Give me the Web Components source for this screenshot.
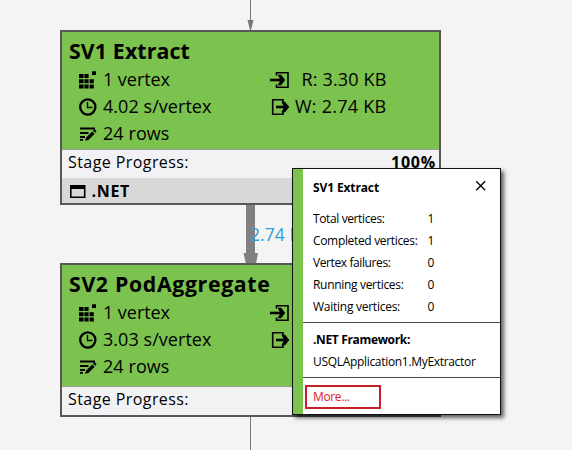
<!DOCTYPE html>
<html lang="en">
<head>
<meta charset="utf-8">
<title>Job graph</title>
<style>
html,body{margin:0;width:572px;height:450px;overflow:hidden;background:#f4f4f4}
body{font-family:"Open Sans","Noto Sans",sans-serif;color:#000}
</style>
</head>
<body>
<job-graph></job-graph>
<script>
// Text run whose tracking is adjusted so that it takes exactly `w` pixels.
class FitText extends HTMLElement{
  constructor(){super();this.attachShadow({mode:'open'}).innerHTML=`<style>
    :host{display:block;white-space:nowrap;flex:none}
    span{display:inline-block;white-space:pre}</style><span><slot></slot></span>`;}
  connectedCallback(){
    const w=parseFloat(this.getAttribute('w')),s=this.shadowRoot.querySelector('span');
    const n=this.textContent.length;
    if(w&&n>1){s.style.letterSpacing=((w-s.getBoundingClientRect().width)/n).toFixed(3)+'px';this.style.width=s.style.width=w+'px';}
  }
}

const ICONS={
  vertex:`<path d="M1 4h4.600v4H1zM6.400 4h4.200v4H6.400zM1 9.200h4.600v4H1zM6.400 9.200h4.200v4H6.400zM11.600 9.200h4.200v4h-4.200zM1 14.500h4.600v4H1zM6.400 14.500h4.200v4H6.400zM11.600 14.500h4.200v4h-4.200zM14 1.200h4v3.800h-4z"/>`,
  clock:`<circle cx="9.800" cy="10" r="7.600" fill="none" stroke="#000" stroke-width="2.300"/><path d="M9.500 5v5.500h5" fill="none" stroke="#000" stroke-width="1.400"/>`,
  rows:`<path d="M2 4.500h15M2 9h8.500M2 13h5" fill="none" stroke="#000" stroke-width="1.900"/><path d="M7 16.800l1.200-3.400 6-6 2.500 2.300-6.200 6.200zM14.900 6.400l1.400-1.300 2.300 2-1.300 1.600zM2 15h3v1.700H2z"/>`,
  read:`<path d="M6.500 5.500V2.700H18V17.300H6.500V14.500" fill="none" stroke="#000" stroke-width="1.600"/><path d="M0 10h12" stroke="#000" stroke-width="2.600"/><path d="M7.500 4.800h3.700l4 5.200-4 5.200H7.500l3-5.200z"/>`,
  write:`<path d="M13 5.500V2.700H2.700V17.300H13V14.500" fill="none" stroke="#000" stroke-width="1.600"/><path d="M6 10h10" stroke="#000" stroke-width="2.600"/><path d="M11.300 4.800h3.700l4.300 5.200-4.300 5.200h-3.700l3-5.200z"/>`,
  window:`<path d="M2 4h15.500v13H2zM3.600 8v7.400h12.300V8z" fill-rule="evenodd"/>`,
  close:`<path d="M5.200 5.200l9 9M14.200 5.200l-9 9" stroke="#000" stroke-width="1.300"/>`
};
class UiIcon extends HTMLElement{
  constructor(){super();this.attachShadow({mode:'open'});}
  connectedCallback(){this.shadowRoot.innerHTML=`<style>:host{display:block;width:20px;height:20px;flex:none}svg{display:block}</style>
    <svg width="20" height="20" viewBox="0 0 20 20">${ICONS[this.getAttribute('name')]}</svg>`;}
}

class StageNode extends HTMLElement{
  constructor(){super();this.attachShadow({mode:'open'});}
  connectedCallback(){
    const a=k=>this.getAttribute(k);
    const io=(icon,key,w)=>`<div class="cell io"><ui-icon name="${icon}"></ui-icon>${a(key)?`<fit-text w="${w}">${a(key)}</fit-text>`:''}</div>`;
    this.shadowRoot.innerHTML=`<style>
      :host{display:flex;flex-direction:column;box-sizing:border-box;width:381px;border:2px solid #585858;border-bottom-width:2.500px}
      .main{background:#7cc24e;border-bottom:1px solid #9a9a96;padding:0 0 0 7px;box-sizing:border-box;height:var(--main,118px)}
      .title{font-size:21.300px;font-weight:700;line-height:28px;padding-top:5px}
      .stats{display:grid;grid-template-columns:201px 1fr;grid-auto-rows:27px;line-height:27px;font-size:18px;padding-top:1px}
      .cell{display:flex;align-items:center}
      .left{padding-left:9px;gap:5px}
      .io fit-text{margin-left:auto}.io{width:116.500px}
      .progress{display:flex;justify-content:space-between;height:28px;line-height:25px;font-size:16px;background:#f2f2f4;padding:0 3px 0 6px}
    </style>
    <div class="main"><fit-text class="title" w="${a('tw')}">${a('name')}</fit-text>
      <div class="stats">
        <div class="cell left"><ui-icon name="vertex"></ui-icon><fit-text w="67">1 vertex</fit-text></div>
        ${io('read','read',85)}
        <div class="cell left"><ui-icon name="clock"></ui-icon><fit-text w="108.500">${a('time')} s/vertex</fit-text></div>
        ${io('write','write',91.5)}
        <div class="cell left"><ui-icon name="rows"></ui-icon><fit-text w="66.500">24 rows</fit-text></div>
      </div></div>
    <div class="progress"><fit-text w="121">Stage Progress:</fit-text>${a('done')?`<fit-text w="45" style="font-weight:700">${a('done')}</fit-text>`:''}</div>
    <slot></slot>`;
  }
}

class CodeBadge extends HTMLElement{
  constructor(){super();this.attachShadow({mode:'open'}).innerHTML=`<style>
    :host{display:flex;align-items:center;gap:4px;height:24.500px;padding:1px 0 0 5.500px;box-sizing:border-box;background:#d8d8d8;font-size:16px;font-weight:700;line-height:24px}
    </style><ui-icon name="window"></ui-icon><fit-text w="38.500">.NET</fit-text>`;}
}

class StageDetails extends HTMLElement{
  constructor(){super();
    const rows=[['Total vertices:',71.5,1],['Completed vertices:',104.5,1],['Vertex failures:',77.5,0],['Running vertices:',90.5,0],['Waiting vertices:',87,0]];
    this.attachShadow({mode:'open'}).innerHTML=`<style>
      :host{display:block;box-sizing:border-box;width:209px;height:247px;border:1px solid #111;background:#fff;box-shadow:3px 3px 4px rgba(0,0,0,.6);font-size:12px;line-height:22px}
      .wrap{display:flex;flex-direction:column;height:245px;box-sizing:border-box;border-left:10px solid #7cc24e}
      section{padding-left:10px}
      section+section{border-top:1px solid #484848}
      header{display:flex;justify-content:space-between;height:39px;padding:8px 9px 0 0;box-sizing:border-box;font-weight:700}
      header ui-icon{margin-top:-1px}
      .counts{height:153px;box-sizing:border-box}
      .row{display:grid;grid-template-columns:114.500px 1fr;height:22px}
      .code{height:55px;padding-top:6px;box-sizing:border-box}
      .head{font-weight:700}
      .more{padding:7px 0 0 2px;height:37px;box-sizing:border-box}
      .link{box-sizing:border-box;width:76px;height:24px;border:2px solid #c52026;color:#e02226;padding-left:6px;line-height:19px}
    </style><div class="wrap">
      <section class="counts"><header><fit-text w="66">SV1 Extract</fit-text><ui-icon name="close"></ui-icon></header>
        ${rows.map(r=>`<div class="row"><fit-text w="${r[1]}">${r[0]}</fit-text><span>${r[2]}</span></div>`).join('')}</section>
      <section class="code"><fit-text class="head" w="97">.NET Framework:</fit-text><fit-text w="162.500">USQLApplication1.MyExtractor</fit-text></section>
      <section class="more"><div class="link"><fit-text w="36.500">More...</fit-text></div></section>
    </div>`;}
}

class JobGraph extends HTMLElement{
  constructor(){super();this.attachShadow({mode:'open'}).innerHTML=`<style>
    :host{display:block;position:relative;width:572px;height:450px;overflow:hidden;background:#f4f4f4}
    .edges,stage-node,stage-details,.label{position:absolute}
    .edges{left:0;top:0}
    .n1{left:60px;top:30px}.n2{left:60px;top:263px;--main:122px}
    .label{left:250px;top:221px;font-size:17.500px;line-height:27px;color:#2c9fd9}
    stage-details{left:292px;top:168px}
  </style>
  <svg class="edges" width="572" height="450"><path d="M250.500 0V22M250.500 416V450" stroke="#777" stroke-width="1"/>
    <path d="M247.500 20h6l-2.500 10h-1z" fill="#777"/><path d="M246 204h9v49h3l-2 11h-10l-2.500-11h2.500z" fill="#808080"/></svg>
  <fit-text class="label" w="61.500">2.74 KB</fit-text>
  <stage-node class="n1" name="SV1 Extract" tw="121" time="4.02" read="R: 3.30 KB" write="W: 2.74 KB" done="100%"><code-badge></code-badge></stage-node>
  <stage-node class="n2" name="SV2 PodAggregate" tw="201.500" time="3.03"></stage-node>
  <stage-details></stage-details>`;}
}
customElements.define('fit-text',FitText);
customElements.define('ui-icon',UiIcon);
customElements.define('code-badge',CodeBadge);
customElements.define('stage-node',StageNode);
customElements.define('stage-details',StageDetails);
customElements.define('job-graph',JobGraph);
</script>
</body>
</html>
